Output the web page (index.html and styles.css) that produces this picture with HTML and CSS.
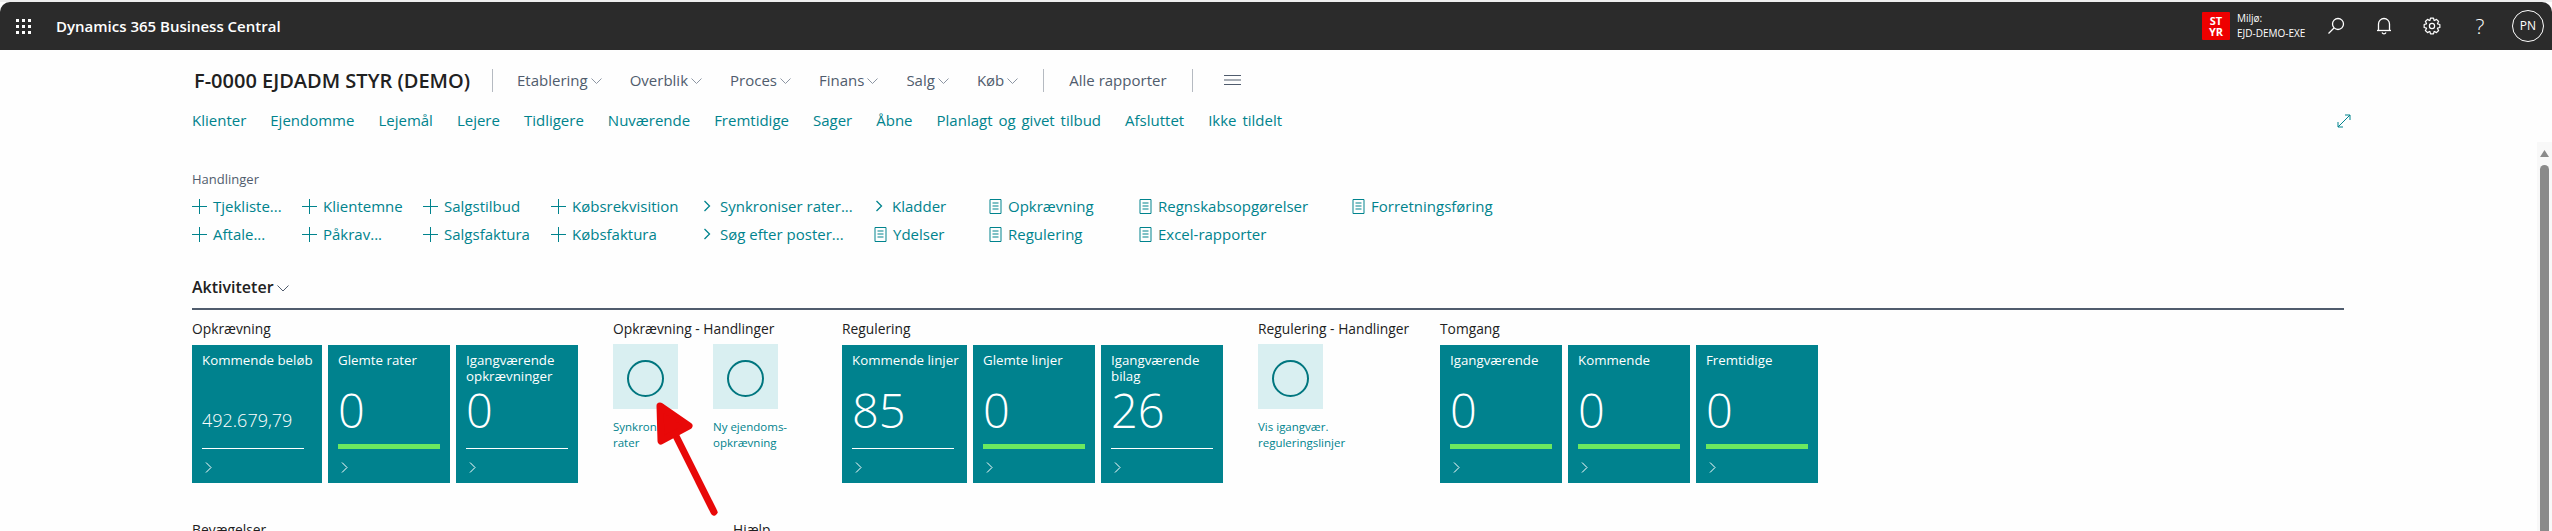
FILE: index.html
```html
<!DOCTYPE html>
<html lang="da">
<head>
    <meta charset="UTF-8">
    <title>Dynamics 365 Business Central</title>
    <link rel="stylesheet" href="styles.css">
</head>
<body>
<div class="page">
    <div class="topbar">
        <svg class="waffle" width="17" height="15" viewBox="0 0 17 15" fill="#fff">
            <rect x="1" y="0" width="3" height="3"/><rect x="7" y="0" width="3" height="3"/><rect x="13" y="0" width="3" height="3"/>
            <rect x="1" y="6" width="3" height="3"/><rect x="7" y="6" width="3" height="3"/><rect x="13" y="6" width="3" height="3"/>
            <rect x="1" y="12" width="3" height="3"/><rect x="7" y="12" width="3" height="3"/><rect x="13" y="12" width="3" height="3"/>
        </svg>
        <div class="product">Dynamics 365 Business Central</div>
        <div class="env">
            <div class="env-badge">ST<br>YR</div>
            <div class="env-text">
                <div>Miljø:</div>
                <div>EJD-DEMO-EXE</div>
            </div>
        </div>
        <div class="bar-btn">
            <svg width="20" height="20" viewBox="0 0 20 20" fill="none" stroke="#fff" stroke-width="1.3"><circle cx="12" cy="8" r="5.5"/><path d="M8 12 L2.5 17.5"/></svg>
        </div>
        <div class="bar-btn">
            <svg width="16" height="18" viewBox="0 0 16 18" fill="none" stroke="#fff" stroke-width="1.3"><path d="M2.5 13.5 V7 a5.5 5.5 0 0 1 11 0 V13.5"/><path d="M1 13.5 H15"/><path d="M6 15.5 a2.2 2.2 0 0 0 4 0"/></svg>
        </div>
        <div class="bar-btn">
            <svg width="18" height="18" viewBox="0 0 18 18" fill="none" stroke="#fff" stroke-width="1.2" stroke-linejoin="round"><polygon points="6.95,3.36 7.47,1.15 10.53,1.15 11.05,3.36 11.54,3.56 13.47,2.37 15.63,4.53 14.44,6.46 14.64,6.95 16.85,7.47 16.85,10.53 14.64,11.05 14.44,11.54 15.63,13.47 13.47,15.63 11.54,14.44 11.05,14.64 10.53,16.85 7.47,16.85 6.95,14.64 6.46,14.44 4.53,15.63 2.37,13.47 3.56,11.54 3.36,11.05 1.15,10.53 1.15,7.47 3.36,6.95 3.56,6.46 2.37,4.53 4.53,2.37 6.46,3.56"/><circle cx="9" cy="9" r="2.6"/></svg>
        </div>
        <div class="bar-btn help">?</div>
        <div class="bar-btn"><div class="avatar">PN</div></div>
    </div>

    <div class="content">
        <div class="title-row">
            <div class="company">F-0000 EJDADM STYR (DEMO)</div>
            <div class="divider first"></div>
            <div class="nav-item">Etablering<svg class="chev" width="11" height="6" viewBox="0 0 11 6"><path d="M0.5 0.5 L5.5 5.5 L10.5 0.5"/></svg></div>
            <div class="nav-item">Overblik<svg class="chev" width="11" height="6" viewBox="0 0 11 6"><path d="M0.5 0.5 L5.5 5.5 L10.5 0.5"/></svg></div>
            <div class="nav-item">Proces<svg class="chev" width="11" height="6" viewBox="0 0 11 6"><path d="M0.5 0.5 L5.5 5.5 L10.5 0.5"/></svg></div>
            <div class="nav-item">Finans<svg class="chev" width="11" height="6" viewBox="0 0 11 6"><path d="M0.5 0.5 L5.5 5.5 L10.5 0.5"/></svg></div>
            <div class="nav-item">Salg<svg class="chev" width="11" height="6" viewBox="0 0 11 6"><path d="M0.5 0.5 L5.5 5.5 L10.5 0.5"/></svg></div>
            <div class="nav-item last">Køb<svg class="chev" width="11" height="6" viewBox="0 0 11 6"><path d="M0.5 0.5 L5.5 5.5 L10.5 0.5"/></svg></div>
            <div class="divider"></div>
            <div class="nav-all">Alle rapporter</div>
            <div class="divider"></div>
            <svg class="hamburger" width="17" height="10" viewBox="0 0 17 10"><path d="M0 0.5 H17 M0 5 H17 M0 9.5 H17"/></svg>
        </div>

        <div class="link-row">
            <a>Klienter</a><a>Ejendomme</a><a>Lejemål</a><a>Lejere</a><a>Tidligere</a><a>Nuværende</a><a>Fremtidige</a><a>Sager</a><a>Åbne</a><a>Planlagt og givet tilbud</a><a>Afsluttet</a><a>Ikke tildelt</a>
            <svg class="expand" width="14" height="14" viewBox="0 0 14 14"><path d="M1 13 L13 1 M8 1 H13 V6 M1 8 V13 H6"/></svg>
        </div>

        <div class="actions-label">Handlinger</div>
        <div class="actions-grid">
            <div class="act"><svg class="ico plus" viewBox="0 0 15 15"><path d="M7.5 0 V15 M0 7.5 H15"/></svg>Tjekliste...</div>
            <div class="act"><svg class="ico plus" viewBox="0 0 15 15"><path d="M7.5 0 V15 M0 7.5 H15"/></svg>Aftale...</div>
            <div class="act"><svg class="ico plus" viewBox="0 0 15 15"><path d="M7.5 0 V15 M0 7.5 H15"/></svg>Klientemne</div>
            <div class="act"><svg class="ico plus" viewBox="0 0 15 15"><path d="M7.5 0 V15 M0 7.5 H15"/></svg>Påkrav...</div>
            <div class="act"><svg class="ico plus" viewBox="0 0 15 15"><path d="M7.5 0 V15 M0 7.5 H15"/></svg>Salgstilbud</div>
            <div class="act"><svg class="ico plus" viewBox="0 0 15 15"><path d="M7.5 0 V15 M0 7.5 H15"/></svg>Salgsfaktura</div>
            <div class="act"><svg class="ico plus" viewBox="0 0 15 15"><path d="M7.5 0 V15 M0 7.5 H15"/></svg>Købsrekvisition</div>
            <div class="act"><svg class="ico plus" viewBox="0 0 15 15"><path d="M7.5 0 V15 M0 7.5 H15"/></svg>Købsfaktura</div>
            <div class="act"><svg class="ico arrow" viewBox="0 0 8 12"><path d="M1.5 1 L6.5 6 L1.5 11"/></svg>Synkroniser rater...</div>
            <div class="act"><svg class="ico arrow" viewBox="0 0 8 12"><path d="M1.5 1 L6.5 6 L1.5 11"/></svg>Søg efter poster...</div>
            <div class="act"><svg class="ico arrow" viewBox="0 0 8 12"><path d="M1.5 1 L6.5 6 L1.5 11"/></svg>Kladder</div>
            <div class="act"><svg class="ico doc" viewBox="0 0 13 15"><path d="M1 0.5 H12 V14.5 H1 Z M3.5 4 H9.5 M3.5 7 H9.5 M3.5 10 H9.5"/></svg>Ydelser</div>
            <div class="act"><svg class="ico doc" viewBox="0 0 13 15"><path d="M1 0.5 H12 V14.5 H1 Z M3.5 4 H9.5 M3.5 7 H9.5 M3.5 10 H9.5"/></svg>Opkrævning</div>
            <div class="act"><svg class="ico doc" viewBox="0 0 13 15"><path d="M1 0.5 H12 V14.5 H1 Z M3.5 4 H9.5 M3.5 7 H9.5 M3.5 10 H9.5"/></svg>Regulering</div>
            <div class="act"><svg class="ico doc" viewBox="0 0 13 15"><path d="M1 0.5 H12 V14.5 H1 Z M3.5 4 H9.5 M3.5 7 H9.5 M3.5 10 H9.5"/></svg>Regnskabsopgørelser</div>
            <div class="act"><svg class="ico doc" viewBox="0 0 13 15"><path d="M1 0.5 H12 V14.5 H1 Z M3.5 4 H9.5 M3.5 7 H9.5 M3.5 10 H9.5"/></svg>Excel-rapporter</div>
            <div class="act"><svg class="ico doc" viewBox="0 0 13 15"><path d="M1 0.5 H12 V14.5 H1 Z M3.5 4 H9.5 M3.5 7 H9.5 M3.5 10 H9.5"/></svg>Forretningsføring</div>
        </div>

        <div class="section-head">Aktiviteter<svg class="chev dark" width="12" height="7" viewBox="0 0 12 7"><path d="M0.5 0.5 L6 6 L11.5 0.5"/></svg></div>

        <div class="groups">
            <div class="group">
                <div class="group-title">Opkrævning</div>
                <div class="tiles">
                    <div class="tile wide">
                        <div class="tile-title">Kommende beløb</div>
                        <div class="tile-value small">492.679,79</div>
                        <div class="meter"><div class="line"></div></div>
                        <svg class="tile-chev" width="7" height="11" viewBox="0 0 7 11"><path d="M1 0.5 L6 5.5 L1 10.5"/></svg>
                    </div>
                    <div class="tile">
                        <div class="tile-title">Glemte rater</div>
                        <div class="tile-value">0</div>
                        <div class="meter"><div class="ok"></div></div>
                        <svg class="tile-chev" width="7" height="11" viewBox="0 0 7 11"><path d="M1 0.5 L6 5.5 L1 10.5"/></svg>
                    </div>
                    <div class="tile">
                        <div class="tile-title">Igangværende opkrævninger</div>
                        <div class="tile-value">0</div>
                        <div class="meter"><div class="line"></div></div>
                        <svg class="tile-chev" width="7" height="11" viewBox="0 0 7 11"><path d="M1 0.5 L6 5.5 L1 10.5"/></svg>
                    </div>
                </div>
            </div>

            <div class="group actions-two">
                <div class="group-title">Opkrævning - Handlinger</div>
                <div class="action-tiles">
                    <div class="action-tile">
                        <div class="action-box"><div class="ring"></div></div>
                        <div class="action-label">Synkroniser<br>rater</div>
                    </div>
                    <div class="action-tile">
                        <div class="action-box"><div class="ring"></div></div>
                        <div class="action-label">Ny ejendoms-<br>opkrævning</div>
                    </div>
                </div>
            </div>

            <div class="group">
                <div class="group-title">Regulering</div>
                <div class="tiles">
                    <div class="tile mid">
                        <div class="tile-title">Kommende linjer</div>
                        <div class="tile-value">85</div>
                        <div class="meter"><div class="line"></div></div>
                        <svg class="tile-chev" width="7" height="11" viewBox="0 0 7 11"><path d="M1 0.5 L6 5.5 L1 10.5"/></svg>
                    </div>
                    <div class="tile">
                        <div class="tile-title">Glemte linjer</div>
                        <div class="tile-value">0</div>
                        <div class="meter"><div class="ok"></div></div>
                        <svg class="tile-chev" width="7" height="11" viewBox="0 0 7 11"><path d="M1 0.5 L6 5.5 L1 10.5"/></svg>
                    </div>
                    <div class="tile">
                        <div class="tile-title">Igangværende bilag</div>
                        <div class="tile-value">26</div>
                        <div class="meter"><div class="line"></div></div>
                        <svg class="tile-chev" width="7" height="11" viewBox="0 0 7 11"><path d="M1 0.5 L6 5.5 L1 10.5"/></svg>
                    </div>
                </div>
            </div>

            <div class="group actions-one">
                <div class="group-title">Regulering - Handlinger</div>
                <div class="action-tiles">
                    <div class="action-tile">
                        <div class="action-box"><div class="ring"></div></div>
                        <div class="action-label">Vis igangvær.<br>reguleringslinjer</div>
                    </div>
                </div>
            </div>

            <div class="group">
                <div class="group-title">Tomgang</div>
                <div class="tiles">
                    <div class="tile">
                        <div class="tile-title">Igangværende</div>
                        <div class="tile-value">0</div>
                        <div class="meter"><div class="ok"></div></div>
                        <svg class="tile-chev" width="7" height="11" viewBox="0 0 7 11"><path d="M1 0.5 L6 5.5 L1 10.5"/></svg>
                    </div>
                    <div class="tile">
                        <div class="tile-title">Kommende</div>
                        <div class="tile-value">0</div>
                        <div class="meter"><div class="ok"></div></div>
                        <svg class="tile-chev" width="7" height="11" viewBox="0 0 7 11"><path d="M1 0.5 L6 5.5 L1 10.5"/></svg>
                    </div>
                    <div class="tile">
                        <div class="tile-title">Fremtidige</div>
                        <div class="tile-value">0</div>
                        <div class="meter"><div class="ok"></div></div>
                        <svg class="tile-chev" width="7" height="11" viewBox="0 0 7 11"><path d="M1 0.5 L6 5.5 L1 10.5"/></svg>
                    </div>
                </div>
            </div>
        </div>

        <div class="next-row">
            <div class="group-title next-left">Bevægelser</div>
            <div class="group-title">Hjælp</div>
        </div>
    </div>

    <div class="scrollbar">
        <svg class="scroll-up" width="9" height="7" viewBox="0 0 9 7"><path d="M4.5 0 L9 7 H0 Z"/></svg>
        <div class="scroll-thumb"></div>
    </div>

    <svg class="red-arrow" width="80" height="120" viewBox="0 0 80 120" fill="none" stroke="#e80808" stroke-width="7" stroke-linecap="round" stroke-linejoin="round">
        <path d="M64 112 L12 8" />
        <path d="M11 41 L10 6 L39 26 Z" fill="#e80808"/>
    </svg>
</div>
</body>
</html>
```

FILE: styles.css
```css
html, body {
    margin: 0;
    padding: 0;
    overflow: hidden;
}
body {
    font-family: "Open Sans", sans-serif;
    color: #212121;
    background-color: #fefefe;
}
.page {
    position: relative;
    height: 529px;
    overflow: hidden;
    border-top: 2px solid #eeeeee;
}

/* top bar */
.topbar {
    display: flex;
    align-items: center;
    height: 48px;
    background-color: #2b2b2b;
    border-radius: 10px 10px 0 0;
    color: white;
}
.waffle {
    margin-left: 15px;
}
.product {
    margin-left: 24px;
    font-size: 15px;
    font-weight: 600;
    white-space: nowrap;
}
.env {
    display: flex;
    align-items: center;
    margin-left: auto;
    margin-right: 7px;
}
.env-badge {
    width: 28px;
    height: 28px;
    background-color: #ee0000;
    border-radius: 1px;
    font-size: 11px;
    font-weight: 700;
    line-height: 11px;
    text-align: center;
    padding-top: 3px;
    box-sizing: border-box;
}
.env-text {
    margin-left: 7px;
    width: 68px;
    font-size: 10px;
    line-height: 15px;
    white-space: nowrap;
}
.bar-btn {
    display: flex;
    align-items: center;
    justify-content: center;
    width: 48px;
    height: 48px;
}
.help {
    font-size: 21px;
    font-weight: 300;
}
.avatar {
    width: 30px;
    height: 30px;
    border: 1px solid white;
    border-radius: 50%;
    font-size: 12px;
    line-height: 30px;
    text-align: center;
}

/* page head */
.content {
    padding: 18px 208px 0 192px;
}
.title-row {
    display: flex;
    align-items: center;
    height: 24px;
    white-space: nowrap;
}
.company {
    width: 300px;
    font-size: 20px;
    font-weight: 600;
    padding-left: 2px;
    box-sizing: border-box;
}
.divider {
    width: 1px;
    height: 23px;
    background-color: #b5bac1;
    margin: 0 25px;
}
.divider.first {
    margin: 0 24px 0 0;
}
.nav-item {
    display: flex;
    align-items: center;
    margin-right: 28px;
    font-size: 15px;
    color: #505c6d;
}
.nav-item.last {
    margin-right: 0;
}
.nav-all {
    font-size: 15px;
    color: #505c6d;
}
.chev {
    margin-left: 3px;
    margin-top: 2px;
    fill: none;
    stroke: #8d96a3;
    stroke-width: 1;
}
.chev.dark {
    stroke: #505c6d;
}
.hamburger {
    margin-left: 6px;
    fill: none;
    stroke: #505c6d;
    stroke-width: 1;
}
.link-row {
    display: flex;
    align-items: center;
    gap: 24px;
    height: 20px;
    margin-top: 18px;
    font-size: 15px;
    word-spacing: 2px;
    white-space: nowrap;
}
.link-row a {
    color: #00838d;
}
.expand {
    margin-left: auto;
    margin-right: -7px;
    margin-top: 2px;
    fill: none;
    stroke: #00838d;
    stroke-width: 1;
}

/* actions */
.actions-label {
    height: 16px;
    margin-top: 41px;
    font-size: 13px;
    line-height: 16px;
    color: #505c6d;
}
.actions-grid {
    display: grid;
    grid-template-rows: 28px 28px;
    grid-template-columns: 110px 121px 128px 151px 172px 115px 150px 213px auto;
    grid-auto-flow: column;
    margin-top: 5px;
    font-size: 15px;
    color: #00838d;
}
.act {
    display: flex;
    align-items: center;
    white-space: nowrap;
}
.ico {
    flex-shrink: 0;
    fill: none;
    stroke: #00838d;
    stroke-width: 1;
}
.plus {
    width: 15px;
    height: 15px;
    margin-right: 6px;
}
.arrow {
    width: 8px;
    height: 12px;
    margin-left: 1px;
    margin-right: 9px;
    stroke-width: 1.3;
}
.doc {
    width: 13px;
    height: 15px;
    margin-right: 6px;
}

/* activities */
.section-head {
    display: flex;
    align-items: center;
    height: 24px;
    margin-top: 27px;
    padding-bottom: 9px;
    border-bottom: 2px solid #505c6d;
    font-size: 16px;
    font-weight: 600;
}
.section-head .chev {
    margin-left: 3px;
}
.groups {
    display: flex;
    gap: 35px;
    margin-top: 11px;
}
.group-title {
    height: 16px;
    font-size: 13.8px;
    font-weight: 500;
    line-height: 16px;
    white-space: nowrap;
}
.tiles {
    display: flex;
    gap: 6px;
    margin-top: 8px;
}
.tile {
    width: 122px;
    height: 138px;
    padding: 7px 10px 0;
    box-sizing: border-box;
    background-color: #00828e;
    color: white;
}
.tile.wide {
    width: 130px;
}
.tile.mid {
    width: 125px;
}
.tile-title {
    height: 32px;
    font-size: 13.3px;
    line-height: 16px;
    width: 112px;
    white-space: normal;
}
.wide .tile-title, .mid .tile-title {
    white-space: nowrap;
}
.tile-value {
    height: 52px;
    font-size: 47px;
    font-weight: 300;
    line-height: 52px;
}
.tile-value.small {
    font-size: 18px;
    line-height: 32px;
    padding-top: 20px;
    box-sizing: border-box;
}
.meter {
    display: flex;
    align-items: flex-end;
    width: 102px;
    height: 5px;
    margin-top: 8px;
}
.line {
    width: 100%;
    height: 1px;
    background-color: white;
}
.ok {
    width: 100%;
    height: 5px;
    background-color: #6ce85f;
}
.tile-chev {
    display: block;
    margin: 13px 0 0 3px;
    fill: none;
    stroke: white;
    stroke-width: 1;
}

/* action tiles */
.actions-two {
    width: 194px;
}
.actions-one {
    width: 147px;
}
.action-tiles {
    display: flex;
    gap: 35px;
    margin-top: 7px;
}
.action-tile {
    width: 65px;
}
.action-box {
    display: flex;
    align-items: center;
    justify-content: center;
    width: 65px;
    height: 65px;
    background-color: #d9eff1;
}
.ring {
    width: 33px;
    height: 33px;
    margin-top: 3px;
    border: 2px solid #00767f;
    border-radius: 50%;
}
.action-label {
    margin-top: 10px;
    font-size: 11.5px;
    line-height: 16px;
    color: #00838d;
    white-space: nowrap;
}

.next-row {
    display: flex;
    margin-top: 39px;
}
.next-left {
    width: 541px;
}

/* scrollbar and arrow lie over the page */
.scrollbar {
    position: absolute;
    top: 140px;
    right: 0;
    bottom: 0;
    width: 15px;
    background-color: #f8f8f8;
}
.scroll-up {
    display: block;
    margin: 8px 0 0 3px;
    fill: #8a8a8a;
}
.scroll-thumb {
    width: 9px;
    height: 400px;
    margin: 8px 0 0 3px;
    background-color: #8a8a8a;
    border-radius: 5px 5px 0 0;
}
.red-arrow {
    position: absolute;
    left: 650px;
    top: 398px;
}
```
